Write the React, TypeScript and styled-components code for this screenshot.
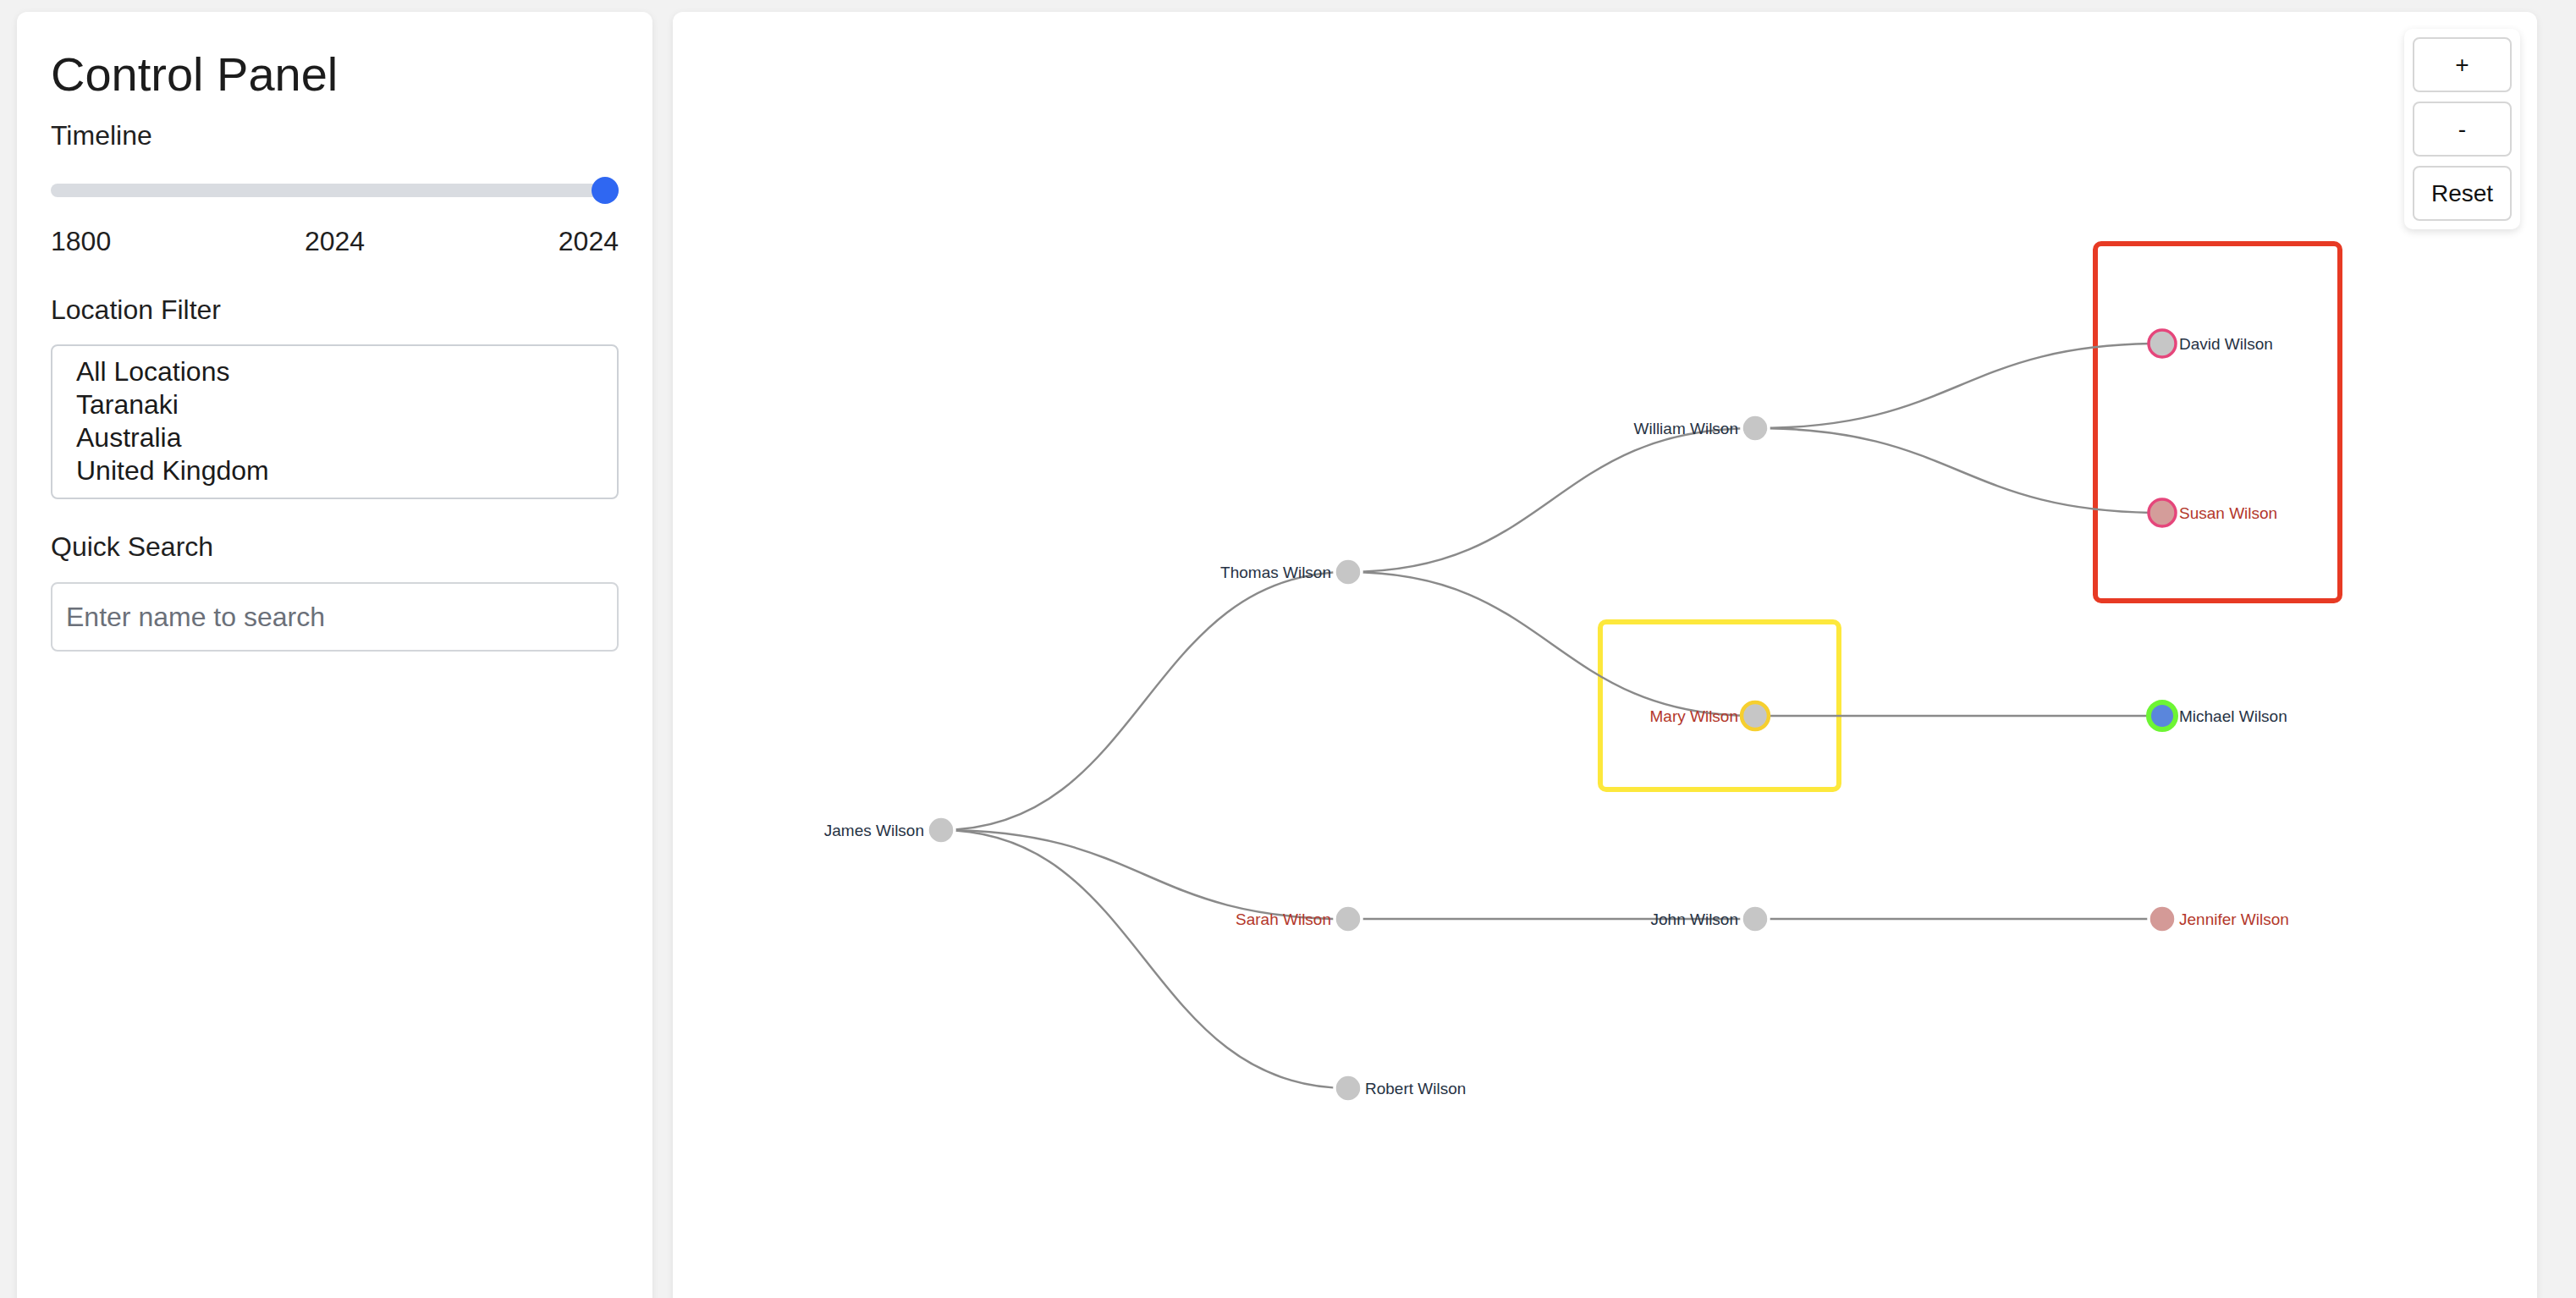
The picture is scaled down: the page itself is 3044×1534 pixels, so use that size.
import styled, { createGlobalStyle } from "styled-components";

const GlobalStyle = createGlobalStyle`
  html, body {
    margin: 0;
    padding: 0;
    background: #f2f2f2;
    font-family: "Liberation Sans", Arial, Helvetica, sans-serif;
    color: #1f1f1f;
  }
  * {
    box-sizing: border-box;
  }
`;

const Layout = styled.div`
  display: grid;
  grid-template-columns: 751px 1fr;
  gap: 24px;
  padding: 14px 46px 0 20px;
  min-height: 1600px;
`;

const Panel = styled.div`
  background: #ffffff;
  border-radius: 12px;
  box-shadow: 0 2px 8px rgba(0, 0, 0, 0.08);
  height: 1580px;
`;

const ControlPanel = styled(Panel)`
  padding: 42px 40px 40px 40px;
`;

const TreePanel = styled(Panel)`
  position: relative;
  overflow: hidden;
`;

const Title = styled.h1`
  margin: 0 0 22px;
  font-size: 56px;
  line-height: 64px;
  font-weight: 400;
  color: #1c1c1c;
`;

const Section = styled.div`
  margin-bottom: 38px;
`;

const Label = styled.div`
  font-size: 32px;
  line-height: 37px;
  margin-bottom: 22px;
  color: #1f1f1f;
`;

const Range = styled.input`
  -webkit-appearance: none;
  appearance: none;
  display: block;
  width: 100%;
  height: 32px;
  margin: 30px 0 0;
  background: transparent;

  &::-webkit-slider-runnable-track {
    height: 16px;
    border-radius: 8px;
    background: #d9dce1;
  }
  &::-webkit-slider-thumb {
    -webkit-appearance: none;
    width: 32px;
    height: 32px;
    margin-top: -8px;
    border-radius: 50%;
    background: #2f67f2;
    border: none;
  }
`;

const Scale = styled.div`
  display: flex;
  justify-content: space-between;
  margin-top: 26px;
  padding-bottom: 6px;
  font-size: 32px;
  line-height: 37px;
`;

const ListBox = styled.div`
  border: 2px solid #cdd1d6;
  border-radius: 8px;
  padding: 11px 0 12px;
  height: 183px;
`;

const Option = styled.div`
  font-size: 32px;
  line-height: 39px;
  padding-left: 28px;
  color: #1a1a1a;
`;

const SearchInput = styled.input`
  display: block;
  width: 100%;
  height: 82px;
  margin-top: 23px;
  padding: 0 16px;
  border: 2px solid #d3d6da;
  border-radius: 8px;
  font-family: inherit;
  font-size: 32px;
  color: #1f1f1f;
  outline: none;

  &::placeholder {
    color: #6b7079;
  }
`;

const ZoomBox = styled.div`
  position: absolute;
  top: 20px;
  right: 20px;
  display: flex;
  flex-direction: column;
  gap: 11px;
  padding: 10px;
  background: #ffffff;
  border-radius: 10px;
  box-shadow: 0 3px 10px rgba(0, 0, 0, 0.12);
`;

const ZoomButton = styled.button`
  width: 117px;
  height: 65px;
  background: #ffffff;
  border: 2px solid #d6d6d6;
  border-radius: 8px;
  font-family: "Liberation Sans", Arial, sans-serif;
  font-size: 28px;
  color: #111;
  cursor: pointer;
`;

const TreeSvg = styled.svg`
  display: block;
  width: 100%;
  height: 100%;
`;

const NodeLabel = styled.text<{ $female?: boolean }>`
  font-family: "Liberation Sans", Arial, sans-serif;
  font-size: 19px;
  fill: ${(p) => (p.$female ? "#b3372b" : "#263244")};
`;

interface Person {
  id: string;
  name: string;
  x: number;
  y: number;
  parent?: string;
  female?: boolean;
  fill?: string;
  stroke?: string;
  strokeWidth?: number;
}

const people: Person[] = [
  { id: "james", name: "James Wilson", x: 317, y: 967 },
  { id: "thomas", name: "Thomas Wilson", x: 798, y: 662, parent: "james" },
  { id: "sarah", name: "Sarah Wilson", x: 798, y: 1072, parent: "james", female: true },
  { id: "robert", name: "Robert Wilson", x: 798, y: 1272, parent: "james" },
  { id: "william", name: "William Wilson", x: 1279, y: 492, parent: "thomas" },
  { id: "mary", name: "Mary Wilson", x: 1279, y: 832, parent: "thomas", female: true, stroke: "#f6cf2f", strokeWidth: 4.5 },
  { id: "john", name: "John Wilson", x: 1279, y: 1072, parent: "sarah" },
  { id: "david", name: "David Wilson", x: 1760, y: 392, parent: "william", stroke: "#e5467b", strokeWidth: 3.5 },
  { id: "susan", name: "Susan Wilson", x: 1760, y: 592, parent: "william", female: true, fill: "#d49d9a", stroke: "#e5467b", strokeWidth: 3.5 },
  { id: "michael", name: "Michael Wilson", x: 1760, y: 832, parent: "mary", fill: "#5a86dc", stroke: "#6df534", strokeWidth: 6 },
  { id: "jennifer", name: "Jennifer Wilson", x: 1760, y: 1072, parent: "john", female: true, fill: "#d49a97" },
];

// highlight frames drawn around groups
const frames = [
  { x: 1681, y: 274, w: 289, h: 422, color: "#e73a24" },
  { x: 1096, y: 721, w: 282, h: 198, color: "#fde83c" },
];

const byId = (id: string) => people.find((p) => p.id === id)!;

function linkPath(s: Person, t: Person) {
  const mx = (s.x + t.x) / 2;
  return `M${s.x},${s.y}C${mx},${s.y} ${mx},${t.y} ${t.x},${t.y}`;
}

function FamilyTree() {
  const hasChildren = (id: string) => people.some((p) => p.parent === id);

  return (
    <TreeSvg>
      {frames.map((f, i) => (
        <rect key={i} x={f.x} y={f.y} width={f.w} height={f.h} rx={7} fill="none" stroke={f.color} strokeWidth={6} />
      ))}
      {people
        .filter((p) => p.parent)
        .map((p) => (
          <path key={p.id} d={linkPath(byId(p.parent!), p)} fill="none" stroke="#8a8a8a" strokeWidth={2.5} />
        ))}
      {people.map((p) => {
        const left = hasChildren(p.id);
        return (
          <g key={p.id} transform={`translate(${p.x},${p.y})`}>
            <circle r={16} fill={p.fill || "#c6c6c6"} stroke={p.stroke || "#ffffff"} strokeWidth={p.strokeWidth || 3.5} />
            <NodeLabel x={left ? -20 : 20} dy="0.35em" textAnchor={left ? "end" : "start"} $female={p.female}>
              {p.name}
            </NodeLabel>
          </g>
        );
      })}
    </TreeSvg>
  );
}

function App() {
  return (
    <>
      <GlobalStyle />
      <Layout>
        <ControlPanel>
          <Title>Control Panel</Title>
          <Section>
            <Label>Timeline</Label>
            <Range type="range" min={1800} max={2024} defaultValue={2024} />
            <Scale>
              <span>1800</span>
              <span>2024</span>
              <span>2024</span>
            </Scale>
          </Section>
          <Section>
            <Label>Location Filter</Label>
            <ListBox role="listbox">
              <Option>All Locations</Option>
              <Option>Taranaki</Option>
              <Option>Australia</Option>
              <Option>United Kingdom</Option>
            </ListBox>
          </Section>
          <Section>
            <Label>Quick Search</Label>
            <SearchInput type="text" placeholder="Enter name to search" />
          </Section>
        </ControlPanel>
        <TreePanel>
          <FamilyTree />
          <ZoomBox>
            <ZoomButton>+</ZoomButton>
            <ZoomButton>-</ZoomButton>
            <ZoomButton>Reset</ZoomButton>
          </ZoomBox>
        </TreePanel>
      </Layout>
    </>
  );
}

export default App;
